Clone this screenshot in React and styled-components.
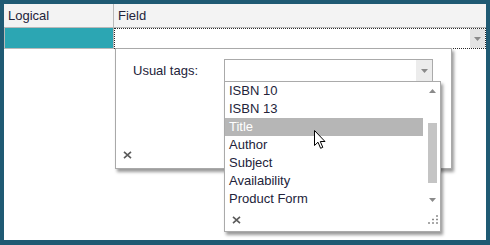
import React from "react";
import styled, { createGlobalStyle } from "styled-components";

const Global = createGlobalStyle`
  html, body { margin: 0; padding: 0; background: #ffffff; }
  * { box-sizing: border-box; }
`;

const Frame = styled.div`
  width: 490px;
  height: 245px;
  background: #1f5a73;
  padding: 4px 4px 5px 4px;
  font-family: "Liberation Sans", Arial, sans-serif;
  font-size: 13px;
  color: #23233a;
`;

const Surface = styled.div`
  position: relative;
  height: 100%;
  background: #ffffff;
`;

const Table = styled.div`
  display: grid;
  grid-template-columns: 110px 1fr;
`;

const HeadCell = styled.div`
  height: 24px;
  line-height: 23px;
  padding-left: ${(p) => (p.$first ? "4px" : "4px")};
  background: #f3f3f3;
  border-bottom: 1px solid #b9b9b9;
  border-right: ${(p) => (p.$first ? "1px solid #b9b9b9" : "none")};
`;

const LogicalCell = styled.div`
  height: 21px;
  background: #2ca6b3;
  border-left: 1px solid #b9b9b9;
  border-right: 1px solid #b9b9b9;
  border-bottom: 1px solid #b9b9b9;
`;

const FieldCell = styled.div`
  height: 21px;
  border: 1px dotted #2a2a2a;
  display: flex;
  justify-content: flex-end;
`;

const DropButton = styled.div`
  width: 15px;
  background: #e3e3e3;
  display: flex;
  align-items: center;
  justify-content: center;
`;

const Arrow = ({ up }) => (
  <svg width="7" height="4" viewBox="0 0 7 4">
    <path d={up ? "M0 4 L3.5 0 L7 4 Z" : "M0 0 L7 0 L3.5 4 Z"} fill="#8a8a8a" />
  </svg>
);

const Popup = styled.div`
  position: absolute;
  left: 111px;
  top: 44px;
  width: 337px;
  height: 121px;
  background: #ffffff;
  border: 1px solid #a9a9a9;
  box-shadow: 2px 3px 3px rgba(0, 0, 0, 0.4);
  display: flex;
  flex-direction: column;
  justify-content: space-between;
`;

const FormRow = styled.div`
  display: flex;
  align-items: center;
  padding: 10px 0 0 17px;
`;

const Label = styled.div`
  width: 91px;
`;

const SelectWrap = styled.div`
  position: relative;
  width: 209px;
  height: 23px;
  border: 1px solid #aaaaaa;
  display: flex;
  justify-content: flex-end;
`;

const SelectButton = styled.div`
  width: 16px;
  background: #ececec;
  display: flex;
  align-items: center;
  justify-content: center;
`;

const CloseBar = styled.div`
  display: flex;
  align-items: center;
  padding: 0 0 9px 7px;
`;

const CloseIcon = () => (
  <svg width="9" height="8" viewBox="0 0 9 8">
    <path d="M1 0.8 L8 7.2 M8 0.8 L1 7.2" stroke="#5a5a5a" strokeWidth="1.6" />
  </svg>
);

const ListBox = styled.div`
  position: absolute;
  left: -1px;
  top: 21px;
  width: 217px;
  height: 151px;
  background: #ffffff;
  border: 1px solid #aaaaaa;
  box-shadow: 2px 3px 3px rgba(0, 0, 0, 0.4);
  display: flex;
  flex-direction: column;
  z-index: 2;
`;

const ScrollArea = styled.div`
  display: flex;
  height: 126px;
`;

const Items = styled.div`
  flex: 1;
`;

const Item = styled.div`
  height: 18px;
  line-height: 18px;
  padding-left: 4px;
  white-space: nowrap;
  background: ${(p) => (p.$active ? "#b6b6b6" : "transparent")};
  color: ${(p) => (p.$active ? "#ffffff" : "#23233a")};
`;

const ScrollBar = styled.div`
  width: 17px;
  display: flex;
  flex-direction: column;
  align-items: center;
  padding: 7px 0 6px 1px;
`;

const Track = styled.div`
  flex: 1;
  width: 9px;
  padding-top: 30px;
  padding-bottom: 12px;
  display: flex;
  flex-direction: column;
`;

const Thumb = styled.div`
  height: 60px;
  background: #c4c4c4;
`;

const ListFooter = styled.div`
  flex: 1;
  display: flex;
  align-items: center;
  justify-content: space-between;
  padding: 0 1px 0 7px;
`;

const Grip = () => (
  <svg width="12" height="11" viewBox="0 0 12 11">
    {[
      [9, 1],
      [5, 4.5],
      [9, 4.5],
      [1, 8],
      [5, 8],
      [9, 8],
    ].map(([x, y], i) => (
      <path
        key={i}
        d={`M${x} ${y + 1} h2 M${x + 1} ${y} v2`}
        stroke="#8c8c8c"
        strokeWidth="1"
      />
    ))}
  </svg>
);

const Cursor = styled.svg`
  position: absolute;
  left: 310px;
  top: 126px;
  z-index: 3;
`;

const items = [
  "ISBN 10",
  "ISBN 13",
  "Title",
  "Author",
  "Subject",
  "Availability",
  "Product Form",
];

export default function App() {
  return (
    <>
      <Global />
      <Frame>
        <Surface>
          <Table>
            <HeadCell $first>Logical</HeadCell>
            <HeadCell>Field</HeadCell>
            <LogicalCell />
            <FieldCell>
              <DropButton>
                <Arrow />
              </DropButton>
            </FieldCell>
          </Table>

          <Popup>
            <FormRow>
              <Label>Usual tags:</Label>
              <SelectWrap>
                <SelectButton>
                  <Arrow />
                </SelectButton>
                <ListBox>
                  <ScrollArea>
                    <Items>
                      {items.map((t) => (
                        <Item key={t} $active={t === "Title"}>
                          {t}
                        </Item>
                      ))}
                    </Items>
                    <ScrollBar>
                      <Arrow up />
                      <Track>
                        <Thumb />
                      </Track>
                      <Arrow />
                    </ScrollBar>
                  </ScrollArea>
                  <ListFooter>
                    <CloseIcon />
                    <Grip />
                  </ListFooter>
                </ListBox>
              </SelectWrap>
            </FormRow>
            <CloseBar>
              <CloseIcon />
            </CloseBar>
          </Popup>

          <Cursor width="13" height="20" viewBox="0 0 13 20">
            <path
              d="M0.5 0.5 L0.5 15.5 L4 12.2 L6.6 18.3 L8.8 17.3 L6.3 11.5 L11 11.5 Z"
              fill="#ffffff"
              stroke="#000000"
              strokeWidth="1"
              strokeLinejoin="miter"
            />
          </Cursor>
        </Surface>
      </Frame>
    </>
  );
}
